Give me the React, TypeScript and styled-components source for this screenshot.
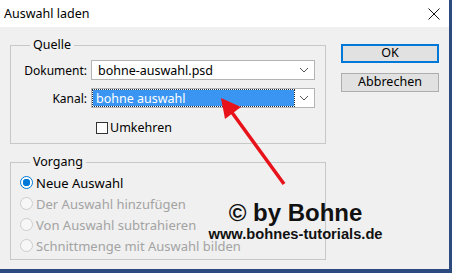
import styled, { createGlobalStyle } from "styled-components";

const GlobalStyle = createGlobalStyle`
  html, body {
    margin: 0;
    padding: 0;
    background: #2d4a7e;
  }
  body {
    font-family: "Noto Sans", "Open Sans", sans-serif;
    font-size: 12px;
    color: #000;
  }
`;

function Chevron() {
  return (
    <svg width="10" height="6" viewBox="0 0 10 6">
      <path d="M1 1 L5 5 L9 1" fill="none" stroke="#555" strokeWidth="1" />
    </svg>
  );
}

function App() {
  return (
    <>
      <GlobalStyle />
      <Window>
        <TitleBar>
          <span>Auswahl laden</span>
          <svg width="12" height="12" viewBox="0 0 12 12">
            <path d="M0.5 0.5 L11.5 11.5 M11.5 0.5 L0.5 11.5" stroke="#111" strokeWidth="1" />
          </svg>
        </TitleBar>
        <Body>
          <LeftColumn>
            <Group $height={107}>
              <Legend>Quelle</Legend>
              <FormGrid>
                <FieldLabel>Dokument:</FieldLabel>
                <Select>
                  <SelectValue>bohne-auswahl.psd</SelectValue>
                  <Arrow><Chevron /></Arrow>
                </Select>
                <FieldLabel>Kanal:</FieldLabel>
                <Select>
                  <SelectValue $selected>bohne auswahl</SelectValue>
                  <Arrow><Chevron /></Arrow>
                </Select>
                <span />
                <CheckRow>
                  <CheckBox />
                  <span>Umkehren</span>
                </CheckRow>
              </FormGrid>
            </Group>
            <Group $height={106}>
              <Legend>Vorgang</Legend>
              <RadioList>
                <RadioRow>
                  <Radio $checked />
                  <span>Neue Auswahl</span>
                </RadioRow>
                <RadioRow $disabled>
                  <Radio />
                  <span>Der Auswahl hinzufügen</span>
                </RadioRow>
                <RadioRow $disabled>
                  <Radio />
                  <span>Von Auswahl subtrahieren</span>
                </RadioRow>
                <RadioRow $disabled>
                  <Radio />
                  <span>Schnittmenge mit Auswahl bilden</span>
                </RadioRow>
              </RadioList>
            </Group>
          </LeftColumn>
          <ButtonColumn>
            <Button $primary>OK</Button>
            <Button>Abbrechen</Button>
          </ButtonColumn>
        </Body>

        <Watermark>
          <Copyright>© by Bohne</Copyright>
          <Url>www.bohnes-tutorials.de</Url>
        </Watermark>

        <ArrowOverlay width="449" height="269" viewBox="0 0 449 269">
          <line x1="284" y1="184" x2="228" y2="107" stroke="#e8131a" strokeWidth="3.5" />
          <polygon points="221,98 241,107 225,119" fill="#e8131a" />
        </ArrowOverlay>
      </Window>
    </>
  );
}

export default App;

const Window = styled.div`
  position: relative;
  width: 449px;
  height: 269px;
  background: #f0f0f0;
  display: flex;
  flex-direction: column;
  overflow: hidden;
`;

const TitleBar = styled.div`
  height: 27px;
  flex: none;
  background: #fff;
  display: flex;
  align-items: center;
  justify-content: space-between;
  padding: 0 9px 0 4px;
  font-size: 12.5px;
`;

const Body = styled.div`
  display: flex;
  padding: 10px 0 0 10px;
`;

const LeftColumn = styled.div`
  width: 316px;
  display: flex;
  flex-direction: column;
  gap: 10px;
`;

const Group = styled.fieldset<{ $height: number }>`
  margin: 0;
  padding: 0;
  min-width: 0;
  height: ${(p) => p.$height}px;
  box-sizing: border-box;
  border: 1px solid #c8c8c8;
`;

const Legend = styled.legend`
  margin-left: 19px;
  padding: 0 3px;
  font-size: 12.5px;
  line-height: 16px;
`;

const FormGrid = styled.div`
  display: grid;
  grid-template-columns: 76px 224px;
  column-gap: 4px;
  row-gap: 8px;
  padding-top: 7px;
  align-items: center;
`;

const FieldLabel = styled.span`
  text-align: right;
  font-size: 12px;
`;

const Select = styled.div`
  height: 20px;
  box-sizing: border-box;
  border: 1px solid #b4b4b4;
  background: #fff;
  display: flex;
  align-items: stretch;
  padding: 1px;
`;

const SelectValue = styled.div<{ $selected?: boolean }>`
  flex: 1;
  display: flex;
  align-items: center;
  padding-left: ${(p) => (p.$selected ? "3px" : "5px")};
  font-size: 12.5px;
  background: ${(p) => (p.$selected ? "#3a95f2" : "transparent")};
  color: ${(p) => (p.$selected ? "#fff" : "#000")};
  outline: ${(p) => (p.$selected ? "1px dotted #1a2a40" : "none")};
`;

const Arrow = styled.div`
  width: 19px;
  display: flex;
  align-items: center;
  justify-content: center;
`;

const CheckRow = styled.label`
  display: flex;
  align-items: center;
  gap: 2px;
  padding-left: 5px;
  margin-top: 3px;
  font-size: 12.5px;
`;

const CheckBox = styled.span`
  width: 12px;
  height: 12px;
  box-sizing: border-box;
  border: 1px solid #333;
  background: #fff;
`;

const RadioList = styled.div`
  display: flex;
  flex-direction: column;
  padding: 2px 0 0 9px;
`;

const RadioRow = styled.div<{ $disabled?: boolean }>`
  height: 21px;
  display: flex;
  align-items: center;
  gap: 3px;
  font-size: 13px;
  color: ${(p) => (p.$disabled ? "#a3a3a3" : "#000")};
`;

const Radio = styled.span<{ $checked?: boolean }>`
  width: 13px;
  height: 13px;
  box-sizing: border-box;
  border-radius: 50%;
  border: 1px solid ${(p) => (p.$checked ? "#0078d7" : "#cdcdcd")};
  background: ${(p) =>
    p.$checked ? "radial-gradient(circle, #0078d7 0 3.5px, #fff 4px)" : "#f7f7f7"};
`;

const ButtonColumn = styled.div`
  display: flex;
  flex-direction: column;
  gap: 10px;
  margin: 7px 0 0 15px;
`;

const Button = styled.button<{ $primary?: boolean }>`
  width: 98px;
  height: 19px;
  box-sizing: border-box;
  padding: 0;
  background: #e1e1e1;
  border: ${(p) => (p.$primary ? "2px solid #0078d7" : "1px solid #adadad")};
  font-family: "Noto Sans", "Open Sans", sans-serif;
  font-size: 12.5px;
  line-height: 1;
  color: #000;
`;

const Watermark = styled.div`
  position: absolute;
  left: 206px;
  top: 199px;
  width: 179px;
  text-align: center;
  font-family: "Liberation Sans", Arial, sans-serif;
  font-weight: bold;
  color: #111;
`;

const Copyright = styled.div`
  font-size: 24px;
  line-height: 27px;
`;

const Url = styled.div`
  font-size: 14.7px;
  line-height: 17px;
`;

const ArrowOverlay = styled.svg`
  position: absolute;
  left: 0;
  top: 0;
  pointer-events: none;
`;
